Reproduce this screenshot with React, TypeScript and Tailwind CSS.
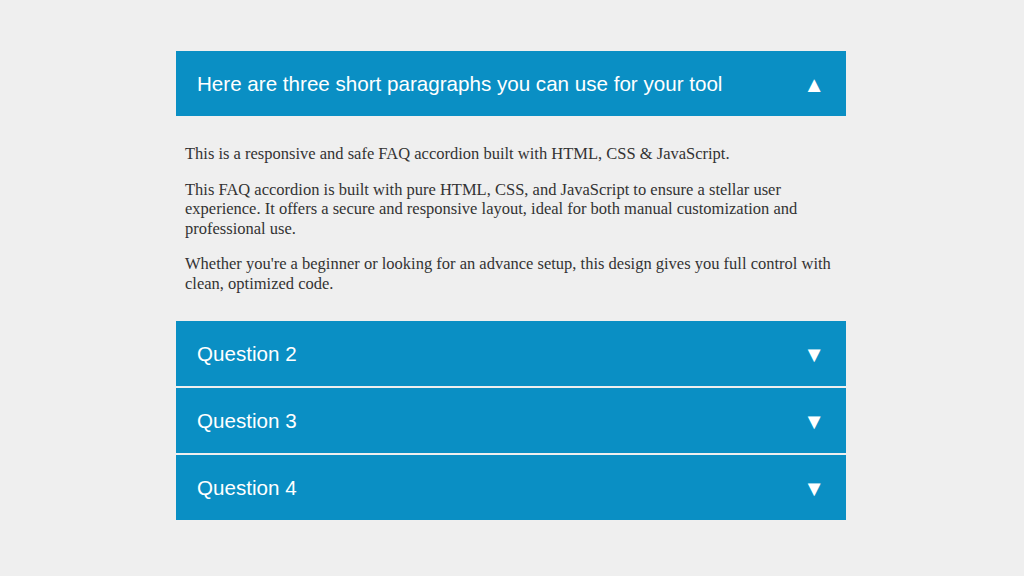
import React, { useState } from "react";

const items = [
  { q: "Here are three short paragraphs you can use for your tool" },
  { q: "Question 2" },
  { q: "Question 3" },
  { q: "Question 4" },
];

export default function App() {
  const [open, setOpen] = useState(0);
  return (
    <div className="w-[1024px] h-[576px] bg-[#efefef] flex pl-[176px] pt-[51px]">
      <div className="w-[670px] flex flex-col gap-[2px]">
        {items.map((it, i) => (
          <div key={i} className="flex flex-col">
            <button
              onClick={() => setOpen(open === i ? -1 : i)}
              className="h-[65px] bg-[#0a8fc4] flex items-center justify-between pl-[21px] pr-[21px] pt-[2px] text-white text-[20.6px] text-left"
              style={{ fontFamily: '"Liberation Sans", Arial, sans-serif' }}
            >
              <span>{it.q}</span>
              <span className="text-[22px] leading-none">{open === i ? "▲" : "▼"}</span>
            </button>
            {open === i && (
              <div
                className="px-[9px] pt-[12px] pb-[10px] text-[#333] text-[16.5px] leading-[19.5px]"
                style={{ fontFamily: '"Liberation Serif", "Times New Roman", serif' }}
              >
                {i === 0 ? (
                  <>
                    <p className="my-[16px]">This is a responsive and safe FAQ accordion built with HTML, CSS &amp; JavaScript.</p>
                    <p className="my-[16px]">
                      This FAQ accordion is built with pure HTML, CSS, and JavaScript to ensure a stellar user experience. It offers a secure and responsive layout, ideal for both manual customization and professional use.
                    </p>
                    <p className="my-[16px]">
                      Whether you're a beginner or looking for an advance setup, this design gives you full control with clean, optimized code.
                    </p>
                  </>
                ) : (
                  <p className="my-[16px]">Answer content.</p>
                )}
              </div>
            )}
          </div>
        ))}
      </div>
    </div>
  );
}
